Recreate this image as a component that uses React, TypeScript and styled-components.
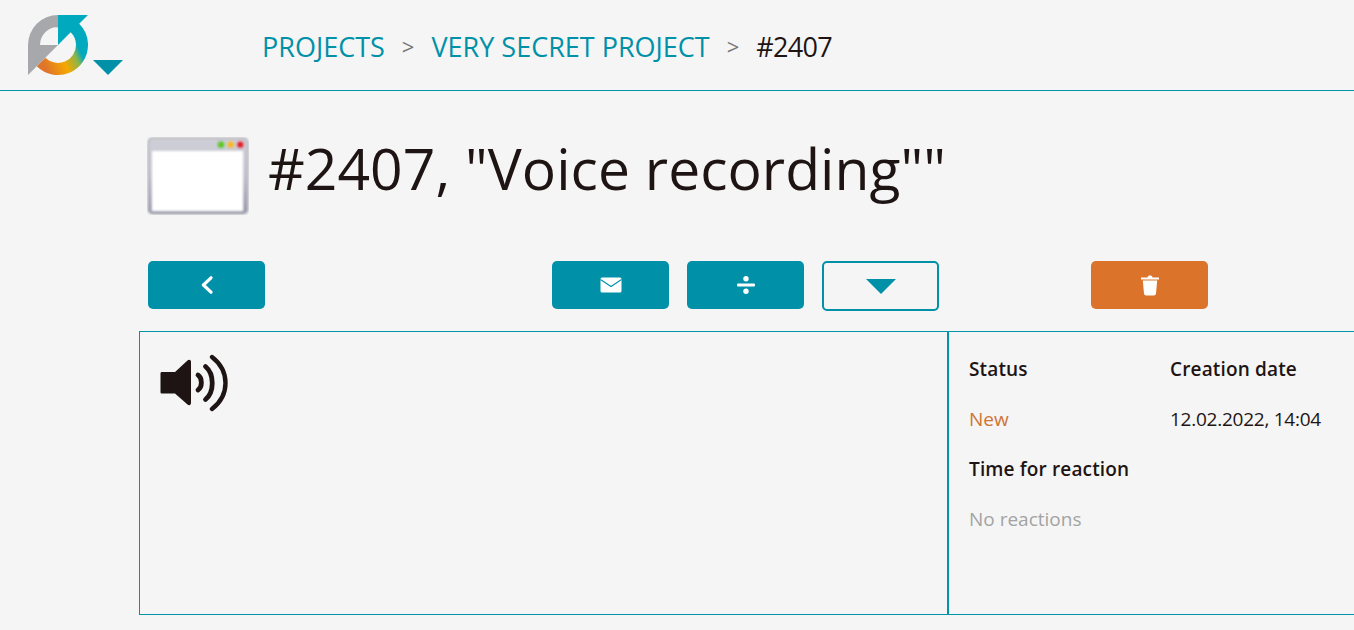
import React from "react";
import styled, { createGlobalStyle } from "styled-components";

const teal = "#0091a9";
const line = "#0095a8";
const ink = "#1e1414";

const Global = createGlobalStyle`
  html, body { margin: 0; padding: 0; background: #f5f5f5; overflow: hidden; }
  body { font-family: "Open Sans", "Noto Sans", "Liberation Sans", sans-serif; color: ${ink}; }
`;

const Page = styled.div`
  width: 1354px;
  height: 630px;
  display: flex;
  flex-direction: column;
  overflow: hidden;
`;

const Header = styled.header`
  height: 90px;
  flex: none;
  border-bottom: 1px solid ${line};
  display: flex;
  align-items: flex-start;
  padding-left: 28px;
`;

const LogoBox = styled.div`
  width: 234px;
  flex: none;
  display: flex;
  align-items: flex-start;
  padding-top: 15px;
  gap: 5px;
`;

const LogoCaret = styled.svg`
  margin-top: 45px;
  display: block;
`;

const Crumbs = styled.nav`
  display: flex;
  align-items: center;
  height: 92px;
  font-size: 27px;
  font-weight: 400;
`;

const Crumb = styled.a`
  color: ${teal};
`;

const Sep = styled.span`
  color: #777;
  margin: 0 17px;
  font-size: 22px;
`;

const Current = styled.span`
  color: ${ink};
  letter-spacing: -0.7px;
`;

const Main = styled.main`
  padding-left: 139px;
  display: flex;
  flex-direction: column;
`;

const TitleRow = styled.div`
  display: flex;
  align-items: center;
  height: 78px;
  margin-top: 46px;
  padding-left: 8px;
  gap: 19px;
`;

const Title = styled.h1`
  margin: 0 0 16px;
  font-size: 57px;
  font-weight: 400;
  line-height: 62px;
  letter-spacing: 0.04px;
  white-space: nowrap;
`;

const Toolbar = styled.div`
  display: flex;
  align-items: flex-start;
  margin-top: 46px;
  padding-left: 9px;
`;

const Button = styled.button<{ $variant?: "primary" | "outline" | "danger"; $left?: number }>`
  width: 117px;
  height: ${(p) => (p.$variant === "outline" ? 50 : 48)}px;
  margin: 0 0 0 ${(p) => p.$left ?? 0}px;
  padding: 0;
  border-radius: 5px;
  border: ${(p) => (p.$variant === "outline" ? `2px solid ${teal}` : "none")};
  background: ${(p) =>
    p.$variant === "outline" ? "transparent" : p.$variant === "danger" ? "#dc732a" : teal};
  display: flex;
  align-items: center;
  justify-content: center;
  flex: none;
`;

const Panels = styled.section`
  display: flex;
  margin-top: 20px;
  height: 284px;
  width: 1215px;
  box-sizing: border-box;
  border: 1px solid ${line};
  border-right: none;
`;

const PlayerPane = styled.div`
  width: 809px;
  flex: none;
  box-sizing: border-box;
  border-right: 2px solid ${line};
  padding: 22px 0 0 20px;
`;

const InfoPane = styled.div`
  flex: 1;
  display: grid;
  grid-template-columns: 201px 1fr;
  grid-auto-rows: 50px;
  padding: 12px 0 0 20px;
  font-size: 19px;
  line-height: 50px;
  white-space: nowrap;
`;

const Label = styled.div`
  font-weight: 600;
  letter-spacing: 0.15px;
`;

const Value = styled.div<{ $tone?: "new" | "muted" | "date" }>`
  color: ${(p) => (p.$tone === "new" ? "#cf7434" : p.$tone === "muted" ? "#a3a3a3" : ink)};
  letter-spacing: ${(p) => (p.$tone === "date" ? "-0.25px" : "0")};
`;

const Icon = styled.svg`
  display: block;
  flex: none;
`;

function Logo() {
  return (
    <Icon width="60" height="60" viewBox="0 0 60 60">
      <defs>
        <linearGradient id="ring" gradientUnits="userSpaceOnUse" x1="58" y1="34" x2="12" y2="56">
          <stop offset="0.12" stopColor="#00a9bd" />
          <stop offset="0.25" stopColor="#8cb54a" />
          <stop offset="0.5" stopColor="#f5a800" />
          <stop offset="0.88" stopColor="#df742c" />
        </linearGradient>
      </defs>
      <path
        fillRule="evenodd"
        fill="#a6a8ab"
        d="M0 60V30A30 30 0 0 1 30 0V30ZM12 30H30V12A18 18 0 0 0 12 30Z"
      />
      <path
        fill="#00a9bd"
        d="M30 0H60L51.2 8.8A30 30 0 0 1 60 31H48A18 18 0 0 0 42.7 17.3L30 30Z"
      />
      <path
        fill="url(#ring)"
        d="M60 30A30 30 0 0 1 8.8 51.2L17.3 42.7A18 18 0 0 0 48 30Z"
      />
    </Icon>
  );
}

function WindowIcon() {
  return (
    <Icon width="102" height="78" viewBox="0 0 102 78">
      <defs>
        <linearGradient id="frame" x1="0" y1="0" x2="0" y2="1">
          <stop offset="0" stopColor="#cfcfd8" />
          <stop offset="0.5" stopColor="#c4c4d2" />
          <stop offset="1" stopColor="#9898ae" />
        </linearGradient>
        <filter id="soft" x="-5%" y="-5%" width="110%" height="110%">
          <feGaussianBlur stdDeviation="0.9" />
        </filter>
      </defs>
      <g filter="url(#soft)">
        <rect x="0.5" y="0.5" width="101" height="77" rx="5" fill="#adadb4" />
        <rect x="2" y="2" width="98" height="74" rx="4" fill="url(#frame)" />
        <rect x="5" y="14" width="91" height="60" fill="#fff" />
        <circle cx="74" cy="7.7" r="3.6" fill="#62c81f" />
        <circle cx="83.7" cy="7.7" r="3.6" fill="#f2bd1d" />
        <circle cx="93.3" cy="7.7" r="3.6" fill="#e3242c" />
      </g>
    </Icon>
  );
}

function Speaker() {
  return (
    <Icon width="70" height="58" viewBox="0 0 70 58">
      <path
        fill={ink}
        d="M2 18H15L27.5 6.5C29.2 5.2 31 6 31 8V49C31 51 29.2 51.8 27.5 50.5L15 39.5H2C1 39.5 .5 39 .5 38V19.5C.5 18.5 1 18 2 18Z"
      />
      <g fill="none" stroke={ink} strokeLinecap="round">
        <path strokeWidth="4.8" d="M38 21C42.5 24 42.5 33 38 36" />
        <path strokeWidth="4.8" d="M45.5 12.5C54.5 20 54.5 38 45.5 45.5" />
        <path strokeWidth="4.4" d="M52 3C70 17 70 41 52 55" />
      </g>
    </Icon>
  );
}

const TriangleDown = () => (
  <Icon width="30" height="15" viewBox="0 0 30 15">
    <path d="M0 0H30L15 15Z" fill={teal} />
  </Icon>
);

function Chevron() {
  return (
    <Icon width="12" height="18" viewBox="0 0 12 18">
      <path d="M10 1.8L2.4 9L10 16.2" fill="none" stroke="#fff" strokeWidth="3.2" strokeLinecap="round" strokeLinejoin="round" />
    </Icon>
  );
}

function Mail() {
  return (
    <Icon width="22" height="16" viewBox="0 0 22 16">
      <rect width="21" height="15" y="0.5" x="0.5" rx="1.5" fill="#fff" />
      <path d="M0.5 2.5L11 9.5L21.5 2.5" fill="none" stroke={teal} strokeWidth="1.1" />
    </Icon>
  );
}

function Divide() {
  return (
    <Icon width="20" height="18" viewBox="0 0 20 18">
      <rect x="1" y="7.4" width="18" height="3.2" rx="1" fill="#fff" />
      <circle cx="10" cy="2.8" r="2.7" fill="#fff" />
      <circle cx="10" cy="15.2" r="2.7" fill="#fff" />
    </Icon>
  );
}

function Trash() {
  return (
    <Icon width="20" height="22" viewBox="0 0 20 22">
      <path d="M1 3.5H7.5C7.7 2.2 8.6 1.6 10 1.6S12.3 2.2 12.5 3.5H19V5.4H1Z" fill="#fff" />
      <path d="M2.8 6.4H17.2L16 19.6C15.9 20.7 15.1 21.4 14 21.4H6C4.9 21.4 4.1 20.7 4 19.6Z" fill="#fff" />
    </Icon>
  );
}

export default function App() {
  return (
    <Page>
      <Global />
      <Header>
        <LogoBox>
          <Logo />
          <LogoCaret width="30" height="15" viewBox="0 0 30 15">
            <path d="M0 0H30L15 15Z" fill={teal} />
          </LogoCaret>
        </LogoBox>
        <Crumbs>
          <Crumb>PROJECTS</Crumb>
          <Sep>&gt;</Sep>
          <Crumb>VERY SECRET PROJECT</Crumb>
          <Sep>&gt;</Sep>
          <Current>#2407</Current>
        </Crumbs>
      </Header>
      <Main>
        <TitleRow>
          <WindowIcon />
          <Title>#2407, "Voice recording""</Title>
        </TitleRow>
        <Toolbar>
          <Button>
            <Chevron />
          </Button>
          <Button $left={287}>
            <Mail />
          </Button>
          <Button $left={18}>
            <Divide />
          </Button>
          <Button $left={18} $variant="outline">
            <TriangleDown />
          </Button>
          <Button $left={152} $variant="danger">
            <Trash />
          </Button>
        </Toolbar>
        <Panels>
          <PlayerPane>
            <Speaker />
          </PlayerPane>
          <InfoPane>
            <Label>Status</Label>
            <Label>Creation date</Label>
            <Value $tone="new">New</Value>
            <Value $tone="date">12.02.2022, 14:04</Value>
            <Label>Time for reaction</Label>
            <div />
            <Value $tone="muted">No reactions</Value>
          </InfoPane>
        </Panels>
      </Main>
    </Page>
  );
}
